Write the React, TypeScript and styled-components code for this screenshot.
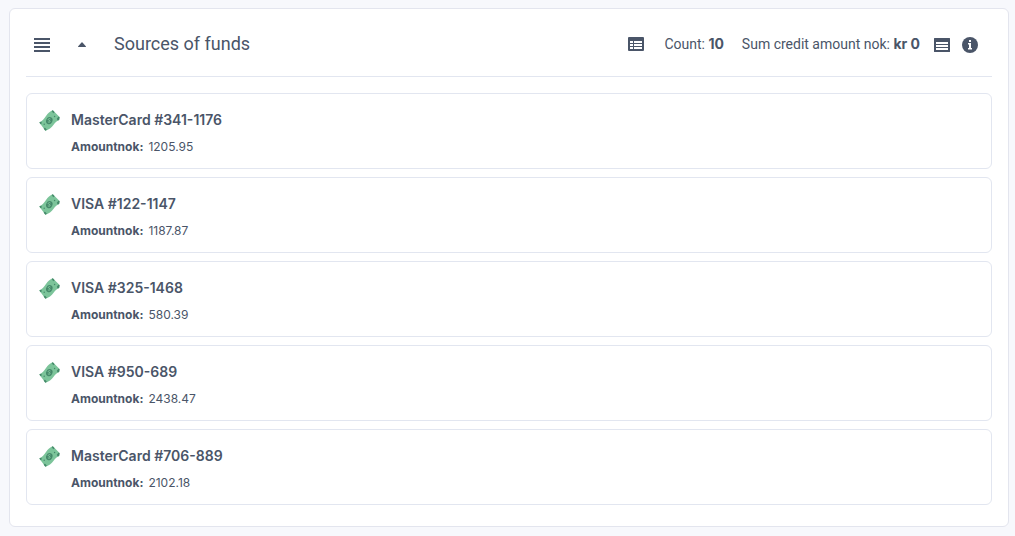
import React from "react";
import styled, { createGlobalStyle } from "styled-components";

const GlobalStyle = createGlobalStyle`
  *, *::before, *::after { box-sizing: border-box; }
  body {
    margin: 0;
    background: #f7f8fc;
    color: #4a5568;
    font-family: Inter, "Liberation Sans", sans-serif;
  }
`;

const Page = styled.main`
  padding: 8px 6px 8px 9px;
`;

const Panel = styled.section`
  padding: 0 16px 21px;
  background: #fff;
  border: 1px solid #e3e5ee;
  border-radius: 6px;
`;

const Header = styled.header`
  display: flex;
  align-items: center;
  justify-content: space-between;
  height: 68px;
  padding: 4px 14px 0 8px;
  border-bottom: 1px solid #e2e6f0;
  font-family: Roboto, Inter, sans-serif;
`;

const HeaderGroup = styled.div<{ $gap: number }>`
  display: flex;
  align-items: center;
  gap: ${(p) => p.$gap}px;
`;

const IconButton = styled.button`
  display: flex;
  width: 16px;
  height: 16px;
  padding: 0;
  border: 0;
  background: none;
  color: inherit;
  cursor: pointer;
`;

const Title = styled.h2`
  margin: 0;
  padding-bottom: 2px;
  font-size: 18px;
  line-height: 28px;
  font-weight: 400;
`;

const Stat = styled.span`
  padding-bottom: 2px;
  font-size: 14px;
  line-height: 20px;
  white-space: nowrap;
`;

const List = styled.ul`
  display: flex;
  flex-direction: column;
  gap: 8px;
  margin: 16px 0 0;
  padding: 0;
  list-style: none;
`;

const Item = styled.li`
  display: flex;
  align-items: flex-start;
  gap: 11px;
  padding: 16px 12px 12px;
  border: 1px solid #e2e6f0;
  border-radius: 6px;
`;

const ItemBody = styled.div`
  display: flex;
  flex-direction: column;
  gap: 8px;
`;

const ItemTitle = styled.h3`
  margin: 0;
  font-size: 14px;
  line-height: 20px;
  font-weight: 600;
`;

const Property = styled.p`
  display: flex;
  gap: 5px;
  margin: 0;
  font-size: 12px;
  line-height: 18px;
`;

const Label = styled.strong`
  font-family: Inter, "Liberation Sans", sans-serif;
  font-weight: 700;
`;

const Icon = ({ children }: { children: React.ReactNode }) => (
  <svg width="16" height="16" viewBox="0 0 16 16" fill="currentColor" aria-hidden="true">
    {children}
  </svg>
);

const MenuIcon = () => (
  <Icon>
    <path d="M0 1h16v2H0zM0 5h16v2H0zM0 9h16v2H0zM0 13h16v2H0z" />
  </Icon>
);

const CaretIcon = () => (
  <Icon>
    <path d="M4 9.6 7.5 5.4q.5-.5 1 0L12 9.6q.2.4-.3.4H4.3q-.5 0-.3-.4z" />
  </Icon>
);

const TableIcon = () => (
  <Icon>
    <path
      fillRule="evenodd"
      d="M1 0h14a1 1 0 0 1 1 1v12a1 1 0 0 1-1 1H1a1 1 0 0 1-1-1V1a1 1 0 0 1 1-1zM2 4v2h3V4zM6 4v2h8V4zM2 7v2h3V7zM6 7v2h8V7zM2 10v2h3v-2zM6 10v2h8v-2z"
    />
  </Icon>
);

const ListIcon = () => (
  <Icon>
    <path
      fillRule="evenodd"
      d="M.5 1h15a.5.5 0 0 1 .5.5v13a.5.5 0 0 1-.5.5H.5a.5.5 0 0 1-.5-.5v-13A.5.5 0 0 1 .5 1zM2 5v2h12V5zM2 8v2h12V8zM2 11v2h12v-2z"
    />
  </Icon>
);

const InfoIcon = () => (
  <Icon>
    <circle cx="8" cy="8" r="8" />
    <path fill="#fff" d="M7 3h2v2H7zM6 6h3v5h1v1.5H6V11h1V7.5H6z" />
  </Icon>
);

const BanknoteIcon = () => (
  <svg width="21" height="21" viewBox="0 0 21 21" aria-hidden="true">
    <path
      fill="#7cc49a"
      d="M.3 12.4C3.5 11 5 8.8 7 6 9 3.2 10.8 1.4 13.8.3L20.6 7c-.2 1.4 0 2-.5 3-2 .6-3.7 2.4-5.5 4.8-2 2.8-4.8 5-8.2 5.9z"
    />
    <g fill="#45896a">
      <path d="M.3 12.4l2-.8.5 1.7-1.1 1zM13.8.3l1.9 1.9-1.5 1-1.5-2.3zM20.6 7l-.5 3-1.4.5-.9-1.7 1.6-2zM6.4 20.7l-1.7-2 1.2-1.2 2 2.2z" />
      <ellipse cx="10.3" cy="10.6" rx="3.1" ry="3.7" transform="rotate(25 10.3 10.6)" />
      <circle cx="5.2" cy="14.3" r=".7" />
      <circle cx="15.6" cy="6.5" r=".7" />
    </g>
    <path
      fill="none"
      stroke="#8ccfa6"
      strokeWidth=".9"
      d="M11.4 9c-1-.8-2.4-.2-2.1.7.4.9 1.8.6 1.9 1.5.1.9-1.4 1.3-2.3.6"
    />
  </svg>
);

const sources = [
  { name: "MasterCard #341-1176", amount: "1205.95" },
  { name: "VISA #122-1147", amount: "1187.87" },
  { name: "VISA #325-1468", amount: "580.39" },
  { name: "VISA #950-689", amount: "2438.47" },
  { name: "MasterCard #706-889", amount: "2102.18" },
];

export default function App() {
  return (
    <>
      <GlobalStyle />
      <Page>
        <Panel>
          <Header>
            <HeaderGroup $gap={24}>
              <IconButton type="button" aria-label="Menu">
                <MenuIcon />
              </IconButton>
              <IconButton type="button" aria-label="Collapse">
                <CaretIcon />
              </IconButton>
              <Title>Sources of funds</Title>
            </HeaderGroup>
            <HeaderGroup $gap={14}>
              <HeaderGroup $gap={20}>
                <IconButton type="button" aria-label="Table view">
                  <TableIcon />
                </IconButton>
                <HeaderGroup $gap={18}>
                  <Stat>
                    Count: <Label>10</Label>
                  </Stat>
                  <Stat>
                    Sum credit amount nok: <Label>kr 0</Label>
                  </Stat>
                </HeaderGroup>
              </HeaderGroup>
              <HeaderGroup $gap={12}>
                <IconButton type="button" aria-label="List view">
                  <ListIcon />
                </IconButton>
                <IconButton type="button" aria-label="Information">
                  <InfoIcon />
                </IconButton>
              </HeaderGroup>
            </HeaderGroup>
          </Header>
          <List>
            {sources.map((source) => (
              <Item key={source.name}>
                <BanknoteIcon />
                <ItemBody>
                  <ItemTitle>{source.name}</ItemTitle>
                  <Property>
                    <Label>Amountnok:</Label>
                    <span>{source.amount}</span>
                  </Property>
                </ItemBody>
              </Item>
            ))}
          </List>
        </Panel>
      </Page>
    </>
  );
}
